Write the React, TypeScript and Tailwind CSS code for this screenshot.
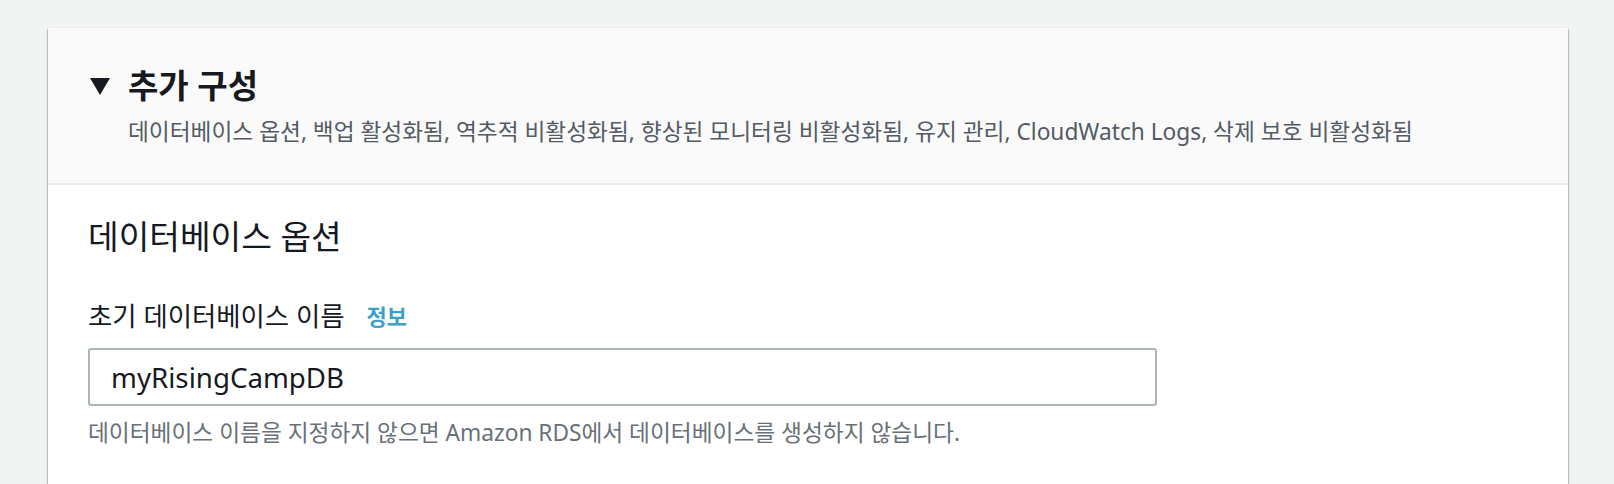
export default function App() {
  const font = { fontFamily: '"Noto Sans", "Noto Sans CJK KR", sans-serif' };

  return (
    <div className="h-[484px] w-full overflow-hidden bg-[#f2f3f3] pl-[48px] pr-[46px] pt-[28px]" style={font}>
      <div className="h-[500px] bg-white shadow-[0_1px_2px_rgba(0,28,36,0.3),1px_1px_1px_rgba(0,28,36,0.15),-1px_1px_1px_rgba(0,28,36,0.15)]">
        <div className="h-[157px] border-b-2 border-[#eaeded] bg-[#fafafa] pl-[42px] pt-[39px]">
          <div className="flex h-[38px] items-center">
            <svg width="20" height="17" viewBox="0 0 20 17" className="mr-[18px]">
              <path d="M0 0 H20 L10 17 Z" fill="#16191f" />
            </svg>
            <h2 className="text-[33px] font-bold leading-[38px] text-[#16191f]">추가 구성</h2>
          </div>
          <p className="mt-[13px] pl-[38px] text-[22.7px] leading-[28px] text-[#545b64]">
            데이터베이스 옵션, 백업 활성화됨, 역추적 비활성화됨, 향상된 모니터링 비활성화됨, 유지 관리, CloudWatch Logs, 삭제 보호 비활성화됨
          </p>
        </div>

        <div className="pl-[40px] pt-[32px]">
          <h3 className="text-[33.3px] leading-[38px] text-[#16191f]">데이터베이스 옵션</h3>

          <div className="mt-[46px] flex h-[30px] items-center gap-[22px]">
            <span className="text-[26.4px] leading-[30px] text-[#16191f]">초기 데이터베이스 이름</span>
            <a className="text-[22px] font-bold text-[#3f9fcb]">정보</a>
          </div>

          <input
            type="text"
            defaultValue="myRisingCampDB"
            className="mt-[17px] h-[58px] w-[1069px] rounded-[3px] border-2 border-[#aab7b8] bg-white px-[21px] text-[27.7px] text-[#16191f] outline-none"
          />

          <p className="mt-[14px] text-[22.7px] leading-[26px] text-[#687078]">
            데이터베이스 이름을 지정하지 않으면 Amazon RDS에서 데이터베이스를 생성하지 않습니다.
          </p>
        </div>
      </div>
    </div>
  );
}
